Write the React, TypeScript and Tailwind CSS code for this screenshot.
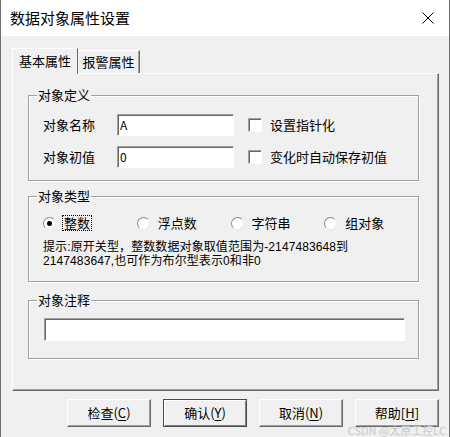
const FONT = "font-['Noto_Sans_CJK_SC','Noto_Sans',sans-serif]";

function GroupBox({ title, className, children }: { title: string; className?: string; children: React.ReactNode }) {
  return (
    <div className={`relative w-[391px] border border-[#a0a0a0] shadow-[1px_1px_0_#fff,inset_1px_1px_0_#fff] ${className ?? ''}`}>
      <span className="absolute left-[8px] -top-[9px] bg-[#f0f0f0] px-[1px] text-[13px] leading-[16px]">{title}</span>
      {children}
    </div>
  );
}

function Field({ value, className }: { value: string; className?: string }) {
  return (
    <div
      className={`border border-t-[#a0a0a0] border-l-[#a0a0a0] border-r-white border-b-white bg-white pl-[2px] text-[12px] leading-[20px] shadow-[inset_1px_1px_0_#696969] ${className ?? ''}`}
    >
      {value}
    </div>
  );
}

function CheckBox({ label }: { label: string }) {
  return (
    <div className="flex items-center">
      <span className="h-[14px] w-[14px] border border-t-[#a0a0a0] border-l-[#a0a0a0] border-r-white border-b-white bg-white shadow-[inset_1px_1px_0_#696969]" />
      <span className="ml-[8px] text-[13px]">{label}</span>
    </div>
  );
}

function Radio({ label, checked }: { label: string; checked?: boolean }) {
  return (
    <div className="flex w-[96px] items-center">
      <span className="flex h-[13px] w-[13px] items-center justify-center rounded-full border border-t-[#8a8a8a] border-l-[#8a8a8a] border-r-[#e8e8e8] border-b-[#e8e8e8] bg-white">
        {checked && <span className="h-[5px] w-[5px] rounded-full bg-black" />}
      </span>
      <span
        className={`ml-[6px] text-[13px] leading-[14px] ${checked ? 'border border-dotted border-black px-[1px]' : 'px-[2px]'}`}
      >
        {label}
      </span>
    </div>
  );
}

function Btn({ label, hot, isDefault }: { label: string; hot: string; isDefault?: boolean }) {
  const [pre, rest] = label.split('|');
  return (
    <button
      type="button"
      className={`flex h-[28px] w-[84px] items-center justify-center bg-[#f0f0f0] text-[13px] ${
        isDefault
          ? 'border border-[#4a4a4a] shadow-[inset_1px_1px_0_#fff,inset_-1px_-1px_0_#808080]'
          : 'border border-t-white border-l-white border-r-[#696969] border-b-[#696969] shadow-[inset_-1px_-1px_0_#a0a0a0]'
      }`}
    >
      {pre}
      <span className="underline underline-offset-2">{hot}</span>
      {rest}
    </button>
  );
}

export default function App() {
  return (
    <div className={`relative h-[437px] w-[450px] overflow-hidden border-x border-[#6f6f6f] bg-[#f0f0f0] text-black ${FONT}`}>
      {/* title bar */}
      <div className="flex h-[36px] items-center justify-between bg-white pl-[9px] pr-[15px]">
        <span className="text-[15px] leading-[20px]">数据对象属性设置</span>
        <svg width="12" height="12" viewBox="0 0 12 12" className="text-black">
          <path d="M0.5 0.5 L11.5 11.5 M11.5 0.5 L0.5 11.5" stroke="currentColor" strokeWidth="1" />
        </svg>
      </div>

      {/* tabs */}
      <div className="ml-[11px] mt-[12px] flex h-[25px] items-start">
        <div className="relative z-10 flex h-[26px] w-[66px] items-center justify-center border-l border-t border-r border-l-white border-t-white border-r-[#696969] bg-[#f0f0f0] pb-[1px] text-[13px]">
          基本属性
        </div>
        <div className="mt-[2px] flex h-[23px] w-[62px] items-center justify-center border-t border-r border-t-white border-r-[#696969] text-[13px] shadow-[inset_-1px_0_0_#a0a0a0]">
          报警属性
        </div>
      </div>

      {/* panel */}
      <div className="ml-[11px] h-[318px] w-[427px] border border-t-white border-l-white border-r-[#696969] border-b-[#696969] pl-[15px] shadow-[inset_-1px_-1px_0_#a0a0a0]">
        <GroupBox title="对象定义" className="mt-[21px] pt-[18px] pb-[12px] pl-[14px]">
          <div className="flex h-[22px] items-center">
            <span className="w-[74px] text-[13px]">对象名称</span>
            <Field value="A" className="h-[22px] w-[117px]" />
            <div className="ml-[14px]">
              <CheckBox label="设置指针化" />
            </div>
          </div>
          <div className="mt-[10px] flex h-[22px] items-center">
            <span className="w-[74px] text-[13px]">对象初值</span>
            <Field value="0" className="h-[22px] w-[117px]" />
            <div className="ml-[14px]">
              <CheckBox label="变化时自动保存初值" />
            </div>
          </div>
        </GroupBox>

        <GroupBox title="对象类型" className="mt-[15px] pt-[18px] pb-[13px] pl-[14px]">
          <div className="flex h-[16px] items-center">
            <Radio label="整数" checked />
            <Radio label="浮点数" />
            <Radio label="字符串" />
            <Radio label="组对象" />
          </div>
          <p className="mt-[9px] font-['Liberation_Sans','Noto_Sans_CJK_SC',sans-serif] text-[12px] leading-[14px] tracking-[0.1px]">
            提示:原开关型，整数数据对象取值范围为-2147483648到
            <br />
            2147483647,也可作为布尔型表示0和非0
          </p>
        </GroupBox>

        <GroupBox title="对象注释" className="mt-[18px] pt-[17px] pb-[17px] pl-[15px]">
          <Field value="" className="h-[23px] w-[361px]" />
        </GroupBox>
      </div>

      {/* buttons */}
      <div className="ml-[66px] mt-[8px] flex gap-[12px]">
        <Btn label="检查(|)" hot="C" />
        <Btn label="确认(|)" hot="Y" isDefault />
        <Btn label="取消(|)" hot="N" />
        <Btn label="帮助[|]" hot="H" />
      </div>

      <span className="absolute bottom-[1px] right-[3px] text-[11px] leading-[12px] text-[#c8c8c8]">CSDN @太原工控LC</span>
    </div>
  );
}
